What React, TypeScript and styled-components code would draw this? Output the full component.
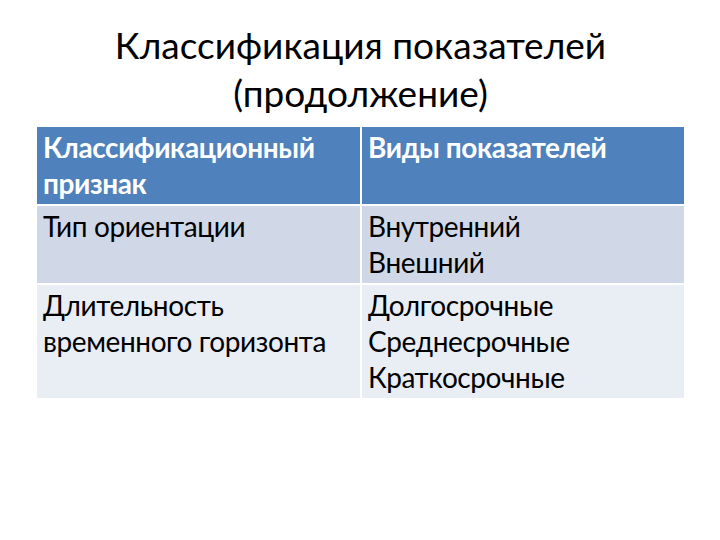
import React from "react";
import styled, { createGlobalStyle } from "styled-components";

const GlobalStyle = createGlobalStyle`
  html, body {
    margin: 0;
    padding: 0;
    background: #ffffff;
  }
  body {
    font-family: Lato, "Open Sans", "Noto Sans", sans-serif;
  }
`;

const Slide = styled.div`
  width: 720px;
  height: 540px;
  box-sizing: border-box;
  padding: 21px 36px 0 37px;
  display: flex;
  flex-direction: column;
  align-items: stretch;
  gap: 10px;
`;

const Title = styled.h1`
  margin: 0;
  font-weight: 400;
  font-size: 37px;
  line-height: 48px;
  color: #000;
  text-align: center;
`;

const Table = styled.div`
  display: grid;
  grid-template-columns: 323px 322px;
  column-gap: 2px;
  row-gap: 2px;
  width: 647px;
`;

const Cell = styled.div<{ $kind: "head" | "odd" | "even" }>`
  box-sizing: border-box;
  padding: 2px 6px 3px 6px;
  font-size: 28px;
  line-height: 36px;
  letter-spacing: -0.4px;
  font-weight: ${(p) => (p.$kind === "head" ? 700 : 400)};
  color: ${(p) => (p.$kind === "head" ? "#ffffff" : "#000000")};
  background: ${(p) =>
    p.$kind === "head" ? "#4f81bd" : p.$kind === "odd" ? "#d0d8e8" : "#e9edf4"};
`;

const Line = styled.div`
  white-space: nowrap;
`;

const rows: { kind: "head" | "odd" | "even"; left: string[]; right: string[] }[] = [
  { kind: "head", left: ["Классификационный", "признак"], right: ["Виды показателей"] },
  { kind: "odd", left: ["Тип ориентации"], right: ["Внутренний", "Внешний"] },
  {
    kind: "even",
    left: ["Длительность", "временного горизонта"],
    right: ["Долгосрочные", "Среднесрочные", "Краткосрочные"],
  },
];

export default function App() {
  return (
    <>
      <GlobalStyle />
      <Slide>
        <Title>
          Классификация показателей
          <br />
          (продолжение)
        </Title>
        <Table>
          {rows.map((r, i) => (
            <React.Fragment key={i}>
              <Cell $kind={r.kind}>
                {r.left.map((t) => (
                  <Line key={t}>{t}</Line>
                ))}
              </Cell>
              <Cell $kind={r.kind}>
                {r.right.map((t) => (
                  <Line key={t}>{t}</Line>
                ))}
              </Cell>
            </React.Fragment>
          ))}
        </Table>
      </Slide>
    </>
  );
}
